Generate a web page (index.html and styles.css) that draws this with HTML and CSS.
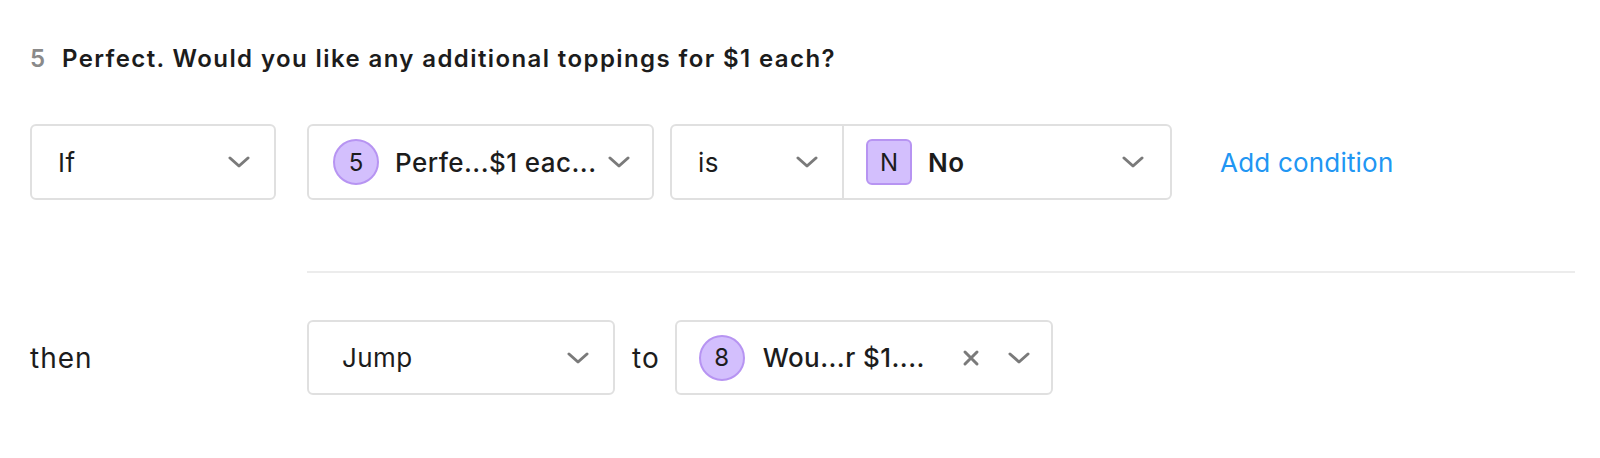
FILE: index.html
```html
<!DOCTYPE html>
<html lang="en">
<head>
    <meta charset="UTF-8">
    <meta name="viewport" content="width=device-width, initial-scale=1.0">
    <title>Logic jump</title>
    <link rel="stylesheet" href="styles.css">
</head>
<body>
    <div class="rule">
        <h2 class="question"><span class="num">5</span> Perfect. Would you like any additional toppings for $1 each?</h2>

        <div class="row cond-row">
            <div class="lead">
                <div class="select if-select">
                    <span class="value">If</span>
                    <svg class="chev" viewBox="0 0 22 12"><path d="M2 2l9 8 9-8"/></svg>
                </div>
            </div>
            <div class="select q-select">
                <span class="badge circle">5</span>
                <span class="value medium">Perfe...$1 eac...</span>
                <svg class="chev" viewBox="0 0 22 12"><path d="M2 2l9 8 9-8"/></svg>
            </div>
            <div class="group">
                <div class="group-part op">
                    <span class="value">is</span>
                    <svg class="chev" viewBox="0 0 22 12"><path d="M2 2l9 8 9-8"/></svg>
                </div>
                <div class="group-part answer">
                    <span class="badge square">N</span>
                    <span class="value strong">No</span>
                    <svg class="chev" viewBox="0 0 22 12"><path d="M2 2l9 8 9-8"/></svg>
                </div>
            </div>
            <a class="add-link" href="#">Add condition</a>
        </div>

        <hr class="divider">

        <div class="row then-row">
            <div class="lead"><span class="label">then</span></div>
            <div class="select action">
                <span class="value">Jump</span>
                <svg class="chev" viewBox="0 0 22 12"><path d="M2 2l9 8 9-8"/></svg>
            </div>
            <span class="label to">to</span>
            <div class="select target">
                <span class="badge circle">8</span>
                <span class="value medium">Wou...r $1....</span>
                <svg class="clear" viewBox="0 0 18 18"><path d="M3 3l12 12M15 3L3 15"/></svg>
                <svg class="chev" viewBox="0 0 22 12"><path d="M2 2l9 8 9-8"/></svg>
            </div>
        </div>
    </div>
</body>
</html>
```

FILE: styles.css
```css
body {
    margin: 0;
    font-family: Inter, "Noto Sans", sans-serif;
    color: #1c1c1c;
    background: #fff;
}
.rule {
    padding: 44px 25px 0 30px;
}
.question {
    margin: 0;
    font-size: 24px;
    font-weight: 600;
    line-height: 30px;
    letter-spacing: 1.4px;
}
.num {
    color: #8a8a8a;
    margin-right: 8px;
}
.row {
    display: flex;
    align-items: center;
}
.cond-row {
    margin-top: 50px;
}
.lead {
    width: 277px;
    flex: none;
}
.select, .group {
    display: flex;
    align-items: center;
    border: 2px solid #e0e0e0;
    border-radius: 6px;
    box-sizing: border-box;
    background: #fff;
}
.select {
    padding: 0 24px 0 24px;
}
.value {
    font-size: 26px;
    letter-spacing: 0.45px;
    flex: 1;
    white-space: nowrap;
}
.medium {
    font-weight: 500;
}
.strong {
    font-weight: 600;
}
.chev {
    width: 22px;
    height: 12px;
    flex: none;
}
.chev path, .clear path {
    fill: none;
    stroke: #7a7a7a;
    stroke-width: 3;
    stroke-linecap: round;
    stroke-linejoin: round;
}
.if-select {
    width: 246px;
    height: 76px;
    padding-left: 26px;
}
.q-select {
    width: 347px;
    height: 76px;
    padding-right: 22px;
}
.badge {
    width: 46px;
    height: 46px;
    box-sizing: border-box;
    display: flex;
    align-items: center;
    justify-content: center;
    background: #d3bffd;
    border: 2px solid #b794f2;
    font-size: 24px;
    letter-spacing: 0;
    flex: none;
    margin-right: 16px;
}
.circle {
    border-radius: 50%;
}
.square {
    border-radius: 6px;
}
.group {
    height: 76px;
    width: 502px;
    margin-left: 16px;
}
.group-part {
    display: flex;
    align-items: center;
    height: 100%;
    box-sizing: border-box;
}
.op {
    width: 172px;
    padding: 0 24px 0 26px;
    border-right: 2px solid #e0e0e0;
}
.answer {
    flex: 1;
    padding: 0 26px 0 22px;
}
.add-link {
    margin-left: 48px;
    color: #2196f3;
    font-size: 26px;
    letter-spacing: 0.2px;
    text-decoration: none;
}
.divider {
    margin: 71px 0 0 277px;
    border: none;
    border-top: 2px solid #ececec;
}
.then-row {
    margin-top: 47px;
}
.label {
    font-size: 28px;
    letter-spacing: 1px;
}
.action {
    width: 308px;
    height: 75px;
    padding-left: 33px;
}
.to {
    margin: 0 15px 0 17px;
}
.target {
    width: 378px;
    height: 75px;
    padding: 0 21px 0 22px;
}
.target .badge {
    margin-right: 18px;
}
.clear {
    width: 18px;
    height: 18px;
    flex: none;
    margin-right: 28px;
}
```
